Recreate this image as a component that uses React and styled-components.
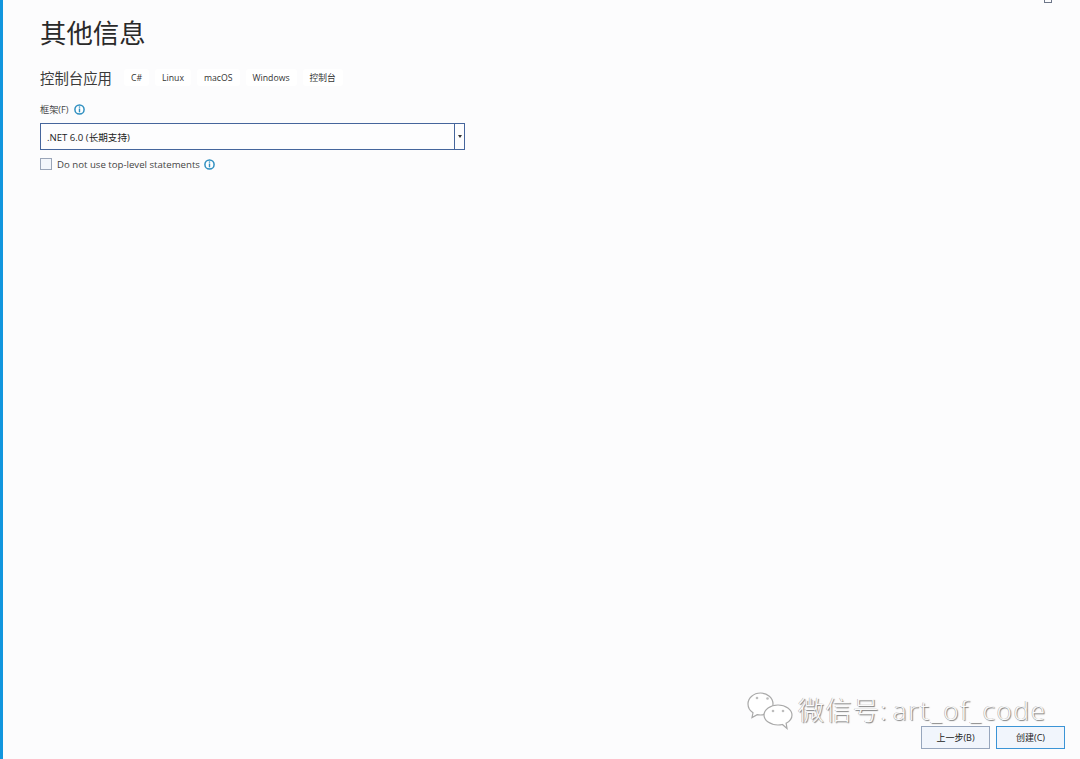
import React from 'react';
import styled, { createGlobalStyle } from 'styled-components';

const cjk = `"Open Sans", "Noto Sans CJK SC", sans-serif`;

const GlobalStyle = createGlobalStyle`
  html, body {
    margin: 0;
    padding: 0;
    background: #fcfcfd;
  }
`;

const Page = styled.div`
  position: relative;
  box-sizing: border-box;
  width: 1080px;
  height: 759px;
  overflow: hidden;
  display: flex;
  flex-direction: column;
  padding: 15px 15px 10px 37px;
  background: #fcfcfd;
  border-left: 3px solid #1196de;
  font-family: ${cjk};
  color: #1e1e1e;
`;

const WindowCorner = styled.div`
  position: absolute;
  top: -5px;
  right: 28px;
  width: 6px;
  height: 6px;
  border: 1px solid #6d7689;
`;

const Title = styled.h1`
  margin: 0;
  font-size: 26.4px;
  line-height: 36px;
  font-weight: 400;
  color: #2a2a2a;
`;

const SubRow = styled.div`
  display: flex;
  align-items: center;
  margin-top: 14px;
  height: 24px;
`;

const SubTitle = styled.h2`
  margin: 0 12px 0 0;
  font-size: 14.4px;
  font-weight: 400;
  color: #3a3a3a;
  white-space: nowrap;
`;

const Tags = styled.div`
  display: flex;
  gap: 6px;
  margin-top: 1px;
`;

const Tag = styled.span`
  display: flex;
  align-items: center;
  height: 17px;
  padding: 0 7px;
  background: #fff;
  border-radius: 3px;
  font-size: 8.7px;
  color: #333;
`;

const FieldLabel = styled.div`
  display: flex;
  align-items: center;
  gap: 5px;
  margin-top: 13px;
  height: 14px;
  font-size: 9.2px;
  color: #444;
`;

const Select = styled.div`
  box-sizing: border-box;
  display: flex;
  width: 425px;
  height: 27px;
  margin-top: 7px;
  background: #fdfdfe;
  border: 1px solid #45659c;
`;

const SelectValue = styled.div`
  flex: 1;
  display: flex;
  align-items: center;
  padding-left: 6px;
  font-size: 9.6px;
  color: #222;
`;

const SelectArrow = styled.div`
  width: 9px;
  display: flex;
  align-items: center;
  justify-content: center;
  border-left: 1px solid #45659c;

  &::after {
    content: '';
    border-left: 2.5px solid transparent;
    border-right: 2.5px solid transparent;
    border-top: 3px solid #333;
  }
`;

const CheckRow = styled.label`
  display: flex;
  align-items: center;
  margin-top: 7px;
  height: 14px;
  font-size: 9.65px;
  color: #444;
`;

const CheckBox = styled.span`
  box-sizing: border-box;
  width: 12px;
  height: 12px;
  margin-right: 5px;
  background: #f3f6fb;
  border: 1px solid #9aa5b8;
`;

const CheckText = styled.span`
  margin-right: 4px;
`;

const Footer = styled.div`
  margin-top: auto;
  display: flex;
  justify-content: flex-end;
  gap: 6px;
`;

const Button = styled.button`
  box-sizing: border-box;
  width: 69px;
  height: 23px;
  padding: 0;
  background: #f1f5fc;
  border: 1px solid ${(p) => (p.$primary ? '#3b94d6' : '#97a6bd')};
  font-family: ${cjk};
  font-size: 9px;
  color: #222;
`;

const Watermark = styled.div`
  position: absolute;
  left: 740px;
  top: 688px;
  display: flex;
  align-items: center;
  gap: 5px;
  font-size: 26px;
  line-height: 40px;
  color: #fbfbfb;
  font-weight: 300;
  letter-spacing: 1.4px;
  white-space: nowrap;
  text-shadow: 1px 1px 1px #7d7d7d, -0.5px 0 0.5px #a8a8a8;
`;

const WatermarkId = styled.span`
  margin-left: 0;
  letter-spacing: 1.8px;
`;

const InfoIcon = () => (
  <svg width="11" height="11" viewBox="0 0 11 11">
    <circle cx="5.5" cy="5.5" r="4.6" fill="#fff" stroke="#2f8fc0" strokeWidth="1.5" />
    <rect x="4.8" y="2.4" width="1.4" height="1.3" fill="#2f8fc0" />
    <rect x="4.8" y="4.5" width="1.4" height="3.8" fill="#2f8fc0" />
  </svg>
);

const WeChatIcon = () => (
  <svg width="50" height="44" viewBox="0 0 50 44">
    <g fill="#fff" stroke="#a9a9a9" strokeWidth="1.2">
      <path d="M17.500 5C10.600 5 5 9.900 5 16c0 3.600 2 6.800 5 8.800L9 29.500l5.200-2.800c1.100.2 2.200.3 3.300.3 6.900 0 12.500-4.900 12.500-11S24.400 5 17.500 5z" />
      <path d="M49 27c0-5.500-6.300-10-14-10s-14 4.500-14 10 6.300 10 14 10c1.500 0 3-.2 4.400-.5l4.600 4-.9-5.300C46.700 33.400 49 30.400 49 27z" />
    </g>
    <g fill="#bdbdbd">
      <circle cx="14" cy="10" r="1.300" />
      <circle cx="24.500" cy="10.500" r="1.300" />
      <circle cx="30" cy="23" r="1.300" />
      <circle cx="40" cy="23" r="1.300" />
    </g>
  </svg>
);

const tags = ['C#', 'Linux', 'macOS', 'Windows', '控制台'];

const App = () => (
  <>
    <GlobalStyle />
    <Page>
      <WindowCorner />
      <Title>其他信息</Title>
      <SubRow>
        <SubTitle>控制台应用</SubTitle>
        <Tags>
          {tags.map((tag) => (
            <Tag key={tag}>{tag}</Tag>
          ))}
        </Tags>
      </SubRow>
      <FieldLabel>
        框架(F)
        <InfoIcon />
      </FieldLabel>
      <Select>
        <SelectValue>.NET 6.0 (长期支持)</SelectValue>
        <SelectArrow />
      </Select>
      <CheckRow>
        <CheckBox />
        <CheckText>Do not use top-level statements</CheckText>
        <InfoIcon />
      </CheckRow>
      <Footer>
        <Button>上一步(B)</Button>
        <Button $primary>创建(C)</Button>
      </Footer>
      <Watermark>
        <WeChatIcon />
        微信号: <WatermarkId>art_of_code</WatermarkId>
      </Watermark>
    </Page>
  </>
);

export default App;
